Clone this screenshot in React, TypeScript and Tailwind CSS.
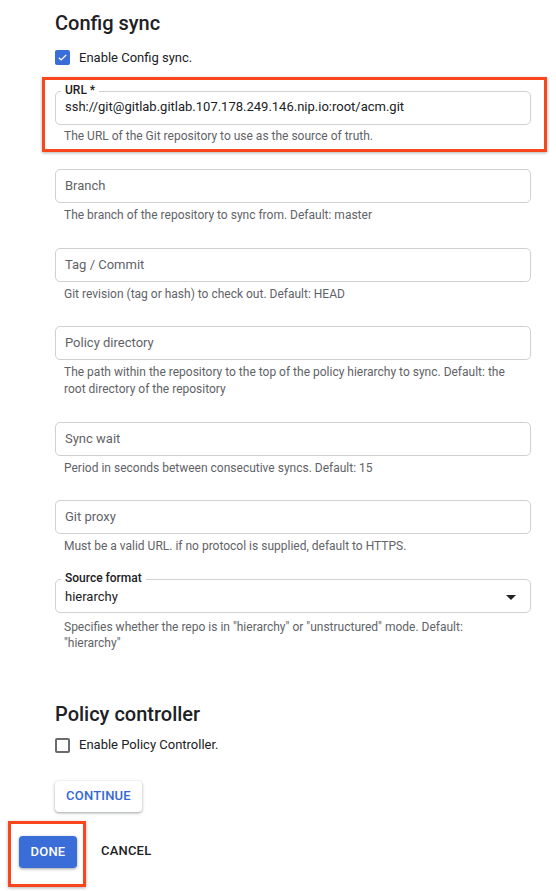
import React from "react";

const font = { fontFamily: "Roboto, 'Noto Sans', Arial, sans-serif" };

function Hint({ children }: { children: React.ReactNode }) {
  return (
    <div className="mt-[4px] px-[9px] text-[12px] leading-[17px] text-[#5f6368]">
      {children}
    </div>
  );
}

function Field({ label, hint, className = "" }: { label: string; hint: React.ReactNode; className?: string }) {
  return (
    <div className={className}>
      <div className="flex h-[34px] items-center rounded-[5px] border border-[#d0d0d0] pl-[9px] text-[13px] text-[#5f6368]">
        {label}
      </div>
      <Hint>{hint}</Hint>
    </div>
  );
}

function Checkbox({ checked }: { checked: boolean }) {
  if (checked) {
    return (
      <div className="flex h-[15px] w-[15px] items-center justify-center rounded-[2px] bg-[#3b6dd8]">
        <svg width="11" height="11" viewBox="0 0 24 24" fill="none">
          <path d="M4 12.5l5 5L20 6.5" stroke="white" strokeWidth="2.6" />
        </svg>
      </div>
    );
  }
  return <div className="h-[15px] w-[15px] rounded-[2px] border-2 border-[#6b6b6b]" />;
}

export default function App() {
  return (
    <div className="min-h-[891px] w-[556px] bg-white text-[#202124]" style={font}>
      <div className="pl-[55px] pr-[25px] pt-[9px]">
        <h2 className="text-[20px] font-medium leading-[28px] text-[#202124]">Config sync</h2>
        <div className="mt-[13px] flex h-[15px] items-center gap-[9px]">
          <Checkbox checked />
          <span className="text-[13px] text-[#202124]">Enable Config sync.</span>
        </div>

        <div className="-ml-[13px] -mr-[16px] mt-[12px] border-[3px] border-[#f9461c] pb-[4px] pl-[10px] pr-[13px] pt-[11px] shadow-[0_1px_3px_rgba(0,0,0,0.3)]">
          <div className="relative flex h-[34px] items-center rounded-[5px] border border-[#d0d0d0] pb-[3px] pl-[9px] text-[13px] text-[#202124]">
            <span className="absolute -top-[9px] left-[5px] bg-white px-[4px] text-[12px] font-medium leading-[14px] text-[#202124]">
              URL *
            </span>
            ssh://git@gitlab.gitlab.107.178.249.146.nip.io:root/acm.git
          </div>
          <div className="mt-[3px] px-[9px] text-[12px] leading-[17px] text-[#5f6368]">
            The URL of the Git repository to use as the source of truth.
          </div>
        </div>

        <Field className="mt-[17px]" label="Branch" hint="The branch of the repository to sync from. Default: master" />
        <Field className="mt-[23.5px]" label="Tag / Commit" hint="Git revision (tag or hash) to check out. Default: HEAD" />
        <Field
          className="mt-[23.5px]"
          label="Policy directory"
          hint="The path within the repository to the top of the policy hierarchy to sync. Default: the root directory of the repository"
        />
        <Field className="mt-[23.5px]" label="Sync wait" hint="Period in seconds between consecutive syncs. Default: 15" />
        <Field className="mt-[23.5px]" label="Git proxy" hint="Must be a valid URL. if no protocol is supplied, default to HTTPS." />

        <div className="mt-[23.5px]">
          <div className="relative flex h-[34px] items-center justify-between rounded-[5px] border border-[#d0d0d0] pl-[9px] pr-[14px] pt-[3px] text-[13px] text-[#202124]">
            <span className="absolute -top-[9px] left-[5px] bg-white px-[4px] text-[12px] font-medium leading-[14px] text-[#202124]">
              Source format
            </span>
            <span>hierarchy</span>
            <svg width="10" height="5" viewBox="0 0 10 5">
              <path d="M0 0h10L5 5z" fill="#202124" />
            </svg>
          </div>
          <div className="mt-[6px] px-[9px] text-[12px] leading-[16px] text-[#5f6368]">
            Specifies whether the repo is in "hierarchy" or "unstructured" mode. Default: "hierarchy"
          </div>
        </div>

        <h2 className="mt-[49px] text-[20px] font-medium leading-[28px] text-[#202124]">Policy controller</h2>
        <div className="mt-[10px] flex h-[15px] items-center gap-[9px]">
          <Checkbox checked={false} />
          <span className="text-[13px] text-[#202124]">Enable Policy Controller.</span>
        </div>

        <button className="mt-[28px] flex h-[31px] w-[87px] items-center justify-center rounded-[4px] bg-white text-[13px] font-medium tracking-[0.2px] text-[#3367d6] shadow-[0_1px_2px_rgba(60,64,67,0.3),0_1px_3px_1px_rgba(60,64,67,0.15)]">
          CONTINUE
        </button>
      </div>

      <div className="mt-[9px] flex items-center pl-[8px]">
        <div className="border-[3px] border-[#f9461c] pb-[16px] pl-[8px] pr-[6px] pt-[12px] shadow-[0_1px_3px_rgba(0,0,0,0.3)]">
          <button className="flex h-[32px] w-[58px] items-center justify-center rounded-[4px] bg-[#3b6dd8] text-[13px] font-medium tracking-[0.2px] text-white shadow-[0_1px_2px_rgba(60,64,67,0.3),0_1px_3px_1px_rgba(60,64,67,0.15)]">
            DONE
          </button>
        </div>
        <button className="-mt-[5px] ml-[15px] text-[13px] font-medium tracking-[0.2px] text-[#202124]">CANCEL</button>
      </div>
    </div>
  );
}
